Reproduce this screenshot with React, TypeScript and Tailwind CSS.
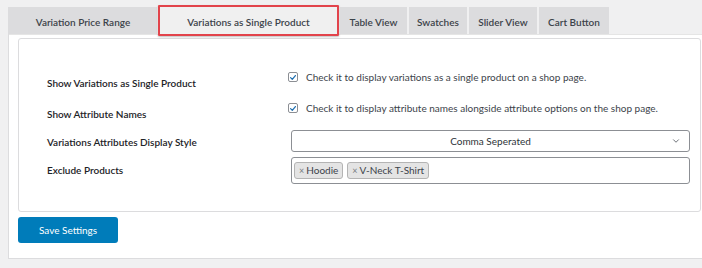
import { ChevronDown } from "lucide-react";

const tabs = [
  { label: "Variation Price Range", width: "w-[148px]" },
  { label: "Variations as Single Product", width: "w-[179px]", active: true },
  { label: "Table View", width: "w-[67px]" },
  { label: "Swatches", width: "w-[58px]" },
  { label: "Slider View", width: "w-[68px]" },
  { label: "Cart Button", width: "w-[70px]" },
];

function Checkbox() {
  return (
    <span className="flex h-[10px] w-[10px] shrink-0 items-center justify-center rounded-[2px] border border-[#8c8f94] bg-white">
      <svg viewBox="0 0 10 10" className="h-[9px] w-[9px]">
        <path d="M2 5.2 L4.1 7.3 L8 2.6" fill="none" stroke="#2271b1" strokeWidth="1.6" strokeLinecap="round" strokeLinejoin="round" />
      </svg>
    </span>
  );
}

function Tag({ children }: { children: string }) {
  return (
    <span className="flex h-[17px] items-center gap-[2px] rounded-[3px] border border-[#b4b4b4] bg-[#e4e4e4] px-[4px] text-[10px] text-[#3c434a]">
      <span className="text-[9px] text-[#787c82]">×</span>
      {children}
    </span>
  );
}

export default function App() {
  return (
    <div className="h-[268px] w-[702px] overflow-hidden bg-[#f0f0f1] pl-[8px] pt-[7px] font-['Lato',sans-serif]">
      <div className="w-[700px] border-b border-l border-[#dcdcde] bg-white">
        <nav className="flex gap-[2px] bg-[#f0f0f1]">
          {tabs.map((tab) => (
            <div
              key={tab.label}
              className={`relative flex h-[27px] shrink-0 items-center justify-center pt-[3px] text-[10px] font-semibold text-[#3c434a] ${tab.width} ${
                tab.active ? "bg-[#f0f0f0]" : "bg-[#dcdcde]"
              }`}
            >
              {tab.label}
              {tab.active && (
                <span className="absolute -bottom-[2px] -left-[1px] -right-[1px] -top-[2px] rounded-[1px] border-2 border-[#e2434b] shadow-[0_1px_2px_rgba(0,0,0,0.25)]" />
              )}
            </div>
          ))}
        </nav>

        <div className="border-t border-[#e5e5e5] pb-[15px] pl-[9px] pt-[3px]">
          <div className="h-[174px] w-[683px] rounded-[3px] border border-[#dcdcde] pl-[28px] pt-[23px]">
            <div className="flex h-[30px] items-start">
              <div className="w-[241px] pt-[14px] text-[10px] font-semibold leading-[14px] text-[#1d2327]">Show Variations as Single Product</div>
              <label className="flex items-center gap-[8px] pt-[8px] text-[10px] leading-[14px] text-[#3c434a]">
                <Checkbox />
                Check it to display variations as a single product on a shop page.
              </label>
            </div>
            <div className="flex h-[32px] items-start">
              <div className="w-[241px] pt-[15px] text-[10px] font-semibold leading-[14px] text-[#1d2327]">Show Attribute Names</div>
              <label className="flex items-center gap-[8px] pt-[9px] text-[10px] leading-[14px] text-[#3c434a]">
                <Checkbox />
                Check it to display attribute names alongside attribute options on the shop page.
              </label>
            </div>
            <div className="flex h-[29px] items-start">
              <div className="w-[244px] pt-[11px] text-[10px] font-semibold leading-[14px] text-[#1d2327]">Variations Attributes Display Style</div>
              <div className="relative mt-[6px] flex h-[22px] w-[399px] items-center justify-center rounded-[3px] border border-[#8c8f94] text-[10px] text-[#2c3338]">
                Comma Seperated
                <ChevronDown className="absolute right-[8px] h-[10px] w-[10px] text-[#50575e]" strokeWidth={2} />
              </div>
            </div>
            <div className="flex items-start">
              <div className="w-[244px] pt-[10px] text-[10px] font-semibold leading-[14px] text-[#1d2327]">Exclude Products</div>
              <div className="mt-[4px] flex h-[27px] w-[399px] items-center gap-[4px] rounded-[3px] border border-[#8c8f94] px-[2px]">
                <Tag>Hoodie</Tag>
                <Tag>V-Neck T-Shirt</Tag>
              </div>
            </div>
          </div>

          <button
            type="button"
            className="mt-[5px] h-[26px] w-[100px] rounded-[3px] bg-[#007cba] text-[10px] text-white"
          >
            Save Settings
          </button>
        </div>
      </div>
    </div>
  );
}
